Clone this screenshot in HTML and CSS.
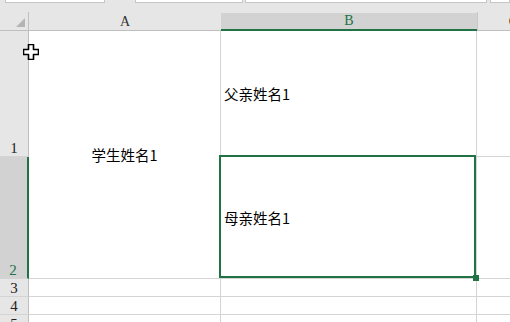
FILE: index.html
```html
<!DOCTYPE html>
<html>
<head>
<meta charset="utf-8">
<link rel="stylesheet" href="styles.css">
</head>
<body>
<div class="app">
  <div class="topbar">
    <div class="box box1"></div>
    <div class="box box2"></div>
    <div class="box box3"></div>
    <div class="box box4"></div>
  </div>
  <div class="sheet">
    <div class="corner"><svg width="9" height="9" viewBox="0 0 9 9"><polygon points="9,0 9,9 0,9" fill="#b4b4b4"/></svg></div>
    <div class="colhead">A</div>
    <div class="colhead sel">B</div>
    <div class="colhead last">C</div>

    <div class="rowhead r1">1</div>
    <div class="cell merged">学生姓名1</div>
    <div class="cell left">父亲姓名1</div>
    <div class="cell last"></div>

    <div class="rowhead sel">2</div>
    <div class="cell left active">母亲姓名1<div class="selection"><span class="handle"></span></div></div>
    <div class="cell last"></div>

    <div class="rowhead">3</div>
    <div class="cell"></div>
    <div class="cell"></div>
    <div class="cell last"></div>

    <div class="rowhead">4</div>
    <div class="cell"></div>
    <div class="cell"></div>
    <div class="cell last"></div>

    <div class="rowhead">5</div>
    <div class="cell"></div>
    <div class="cell"></div>
    <div class="cell last"></div>
  </div>
  <svg class="cursor" width="16" height="16" viewBox="0 0 16 16">
    <path d="M5.5 0.5 H10.5 V5.5 H15.5 V10.5 H10.5 V15.5 H5.5 V10.5 H0.5 V5.5 H5.5 Z" fill="#fff" stroke="#000" stroke-width="1.6" stroke-linejoin="round"/>
  </svg>
</div>
</body>
</html>
```
FILE: styles.css
```css
html, body {
  margin: 0;
  padding: 0;
  background: #fff;
}
.app {
  position: relative;
  width: 510px;
  height: 322px;
  overflow: hidden;
  font-family: "Noto Sans CJK SC", "Liberation Sans", sans-serif;
}
.topbar {
  height: 12px;
  background: #e6e6e6;
  display: flex;
  align-items: flex-start;
}
.box {
  height: 3px;
  box-sizing: border-box;
  background: #fff;
  border: 1px solid #c6c6c6;
  border-top: none;
}
.box1 { margin-left: 5px; width: 102px; }
.box2 { margin-left: 30px; width: 111px; }
.box3 { margin-left: 2px; width: 248px; }
.box4 { margin-left: 3px; width: 20px; }

.sheet {
  display: grid;
  grid-template-columns: 29px 192px 256px 62px;
  grid-template-rows: 19px 126px 122px 18px 18px 18px;
}
.sheet > div {
  box-sizing: border-box;
}
.corner {
  background: #e6e6e6;
  border-right: 1px solid #bfbfbf;
  border-bottom: 1px solid #bfbfbf;
  display: flex;
  justify-content: flex-end;
  align-items: flex-end;
  padding: 0 3px 3px 0;
}
.colhead {
  background: #e6e6e6;
  border-bottom: 1px solid #bfbfbf;
  display: flex;
  align-items: center;
  justify-content: center;
  font-family: "Liberation Serif", serif;
  font-size: 14px;
  color: #333;
  padding-top: 1px;
}
.colhead.sel {
  background: #d2d2d2;
  border-top: 1px solid #e6e6e6;
  border-bottom: 2px solid #217346;
  color: #217346;
  padding-top: 0;
}
.colhead.last {
  border-left: 1px solid #c8c8c8;
  justify-content: flex-end;
  padding-right: 21px;
}
.rowhead {
  background: #e6e6e6;
  border-right: 1px solid #bfbfbf;
  border-bottom: 1px solid #d4d4d4;
  display: flex;
  align-items: flex-end;
  justify-content: center;
  font-family: "Liberation Serif", serif;
  font-size: 15px;
  color: #222;
  line-height: 13px;
  padding-bottom: 1px;
}
.rowhead.sel {
  background: #d2d2d2;
  border-right: 2px solid #217346;
  color: #217346;
  padding-right: 1px;
}
.cell {
  border-right: 1px solid #d4d4d4;
  border-bottom: 1px solid #d4d4d4;
  font-size: 14.5px;
  color: #000;
  display: flex;
  align-items: center;
}
.cell.last {
  border-right: none;
}
.cell.merged {
  grid-row: span 2;
  justify-content: center;
}
.cell.left {
  padding-left: 3px;
}
.cell.active {
  position: relative;
}
.selection {
  position: absolute;
  left: -2px;
  top: -2px;
  right: 0;
  bottom: 0;
  border: 2px solid #217346;
}
.handle {
  position: absolute;
  right: -5px;
  bottom: -5px;
  width: 6px;
  height: 6px;
  background: #217346;
}
.cursor {
  position: absolute;
  left: 23px;
  top: 44px;
}
```
